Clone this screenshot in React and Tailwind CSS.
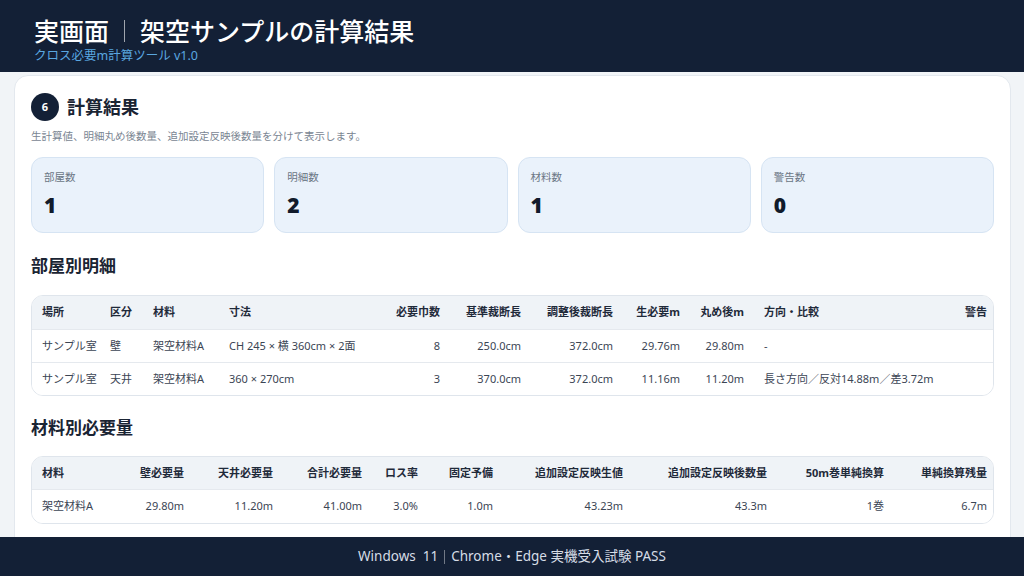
import React from 'react';

const font = { fontFamily: '"Noto Sans", "Noto Sans CJK JP", sans-serif' };

const stats = [
    { label: '部屋数', value: '1' },
    { label: '明細数', value: '2' },
    { label: '材料数', value: '1' },
    { label: '警告数', value: '0' },
];

const roomCols = [
    { name: '場所', w: 68 },
    { name: '区分', w: 43 },
    { name: '材料', w: 76 },
    { name: '寸法', w: 151 },
    { name: '必要巾数', w: 80, right: true },
    { name: '基準裁断長', w: 81, right: true },
    { name: '調整後裁断長', w: 92, right: true },
    { name: '生必要m', w: 67, right: true },
    { name: '丸め後m', w: 64, right: true },
    { name: '方向・比較', w: 178 },
    { name: '警告', w: 65, right: true },
];

const roomRows = [
    ['サンプル室', '壁', '架空材料A', 'CH 245 × 横 360cm × 2面', '8', '250.0cm', '372.0cm', '29.76m', '29.80m', '-', ''],
    ['サンプル室', '天井', '架空材料A', '360 × 270cm', '3', '370.0cm', '372.0cm', '11.16m', '11.20m', '長さ方向／反対14.88m／差3.72m', ''],
];

const matCols = [
    { name: '材料', w: 80 },
    { name: '壁必要量', w: 82, right: true },
    { name: '天井必要量', w: 89, right: true },
    { name: '合計必要量', w: 89, right: true },
    { name: 'ロス率', w: 56, right: true },
    { name: '固定予備', w: 75, right: true },
    { name: '追加設定反映生値', w: 130, right: true },
    { name: '追加設定反映後数量', w: 144, right: true },
    { name: '50m巻単純換算', w: 117, right: true },
    { name: '単純換算残量', w: 103, right: true },
];

const matRows = [
    ['架空材料A', '29.80m', '11.20m', '41.00m', '3.0%', '1.0m', '43.23m', '43.3m', '1巻', '6.7m'],
];

const DataTable = ({ cols, rows }) => (
    <div className="rounded-xl border border-[#dfe5ec] overflow-hidden">
        <table className="w-full table-fixed border-collapse text-[11px]">
            <colgroup>
                {cols.map((c) => (
                    <col key={c.name} style={{ width: c.w }} />
                ))}
            </colgroup>
            <thead>
                <tr className="bg-[#eff3f7] h-[33px]">
                    {cols.map((c) => (
                        <th
                            key={c.name}
                            className={`px-2.5 font-bold text-[#1f2a3a] whitespace-nowrap ${c.right ? 'text-right' : 'text-left'}`}
                        >
                            {c.name}
                        </th>
                    ))}
                </tr>
            </thead>
            <tbody>
                {rows.map((r, i) => (
                    <tr key={i} className="h-[33px] border-t border-[#e5e9ee] bg-white">
                        {r.map((v, j) => (
                            <td
                                key={j}
                                className={`px-2.5 text-[#3b4554] whitespace-nowrap ${cols[j].right ? 'text-right' : 'text-left'}`}
                            >
                                {v}
                            </td>
                        ))}
                    </tr>
                ))}
            </tbody>
        </table>
    </div>
);

export default function App() {
    return (
        <div className="w-[1024px] h-[576px] flex flex-col bg-[#f1f4f7] overflow-hidden" style={font}>
            <header className="h-[72px] shrink-0 bg-[#132036] px-[34px] pt-[14px]">
                <h1 className="text-[25px] leading-[34px] font-medium text-white flex items-center">
                    <span>実画面</span>
                    <span className="mx-[15px] w-px h-[22px] bg-white/60"></span>
                    <span>架空サンプルの計算結果</span>
                </h1>
                <p className="text-[12.5px] leading-[16px] text-[#5aa7e0]">クロス必要m計算ツール v1.0</p>
            </header>

            <main className="flex-1 overflow-hidden pl-[14px] pr-[13px] pt-[3px]">
                <div className="bg-white rounded-t-[14px] border border-[#e3e8ee] px-4 pt-[17px]">
                    <div className="flex items-center gap-2">
                        <span className="w-7 h-7 rounded-full bg-[#132036] text-white text-[11px] font-bold flex items-center justify-center">6</span>
                        <h2 className="text-[18px] font-bold text-[#1a2433]">計算結果</h2>
                    </div>
                    <p className="mt-[8px] text-[10.5px] text-[#7a8592]">生計算値、明細丸め後数量、追加設定反映後数量を分けて表示します。</p>

                    <div className="mt-[12px] grid grid-cols-4 gap-[10px]">
                        {stats.map((s) => (
                            <div key={s.label} className="h-[76px] rounded-xl bg-[#eaf2fb] border border-[#d6e4f3] px-3 pt-[12px]">
                                <div className="text-[10.5px] text-[#6b7684]">{s.label}</div>
                                <div className="mt-[6px] text-[21px] leading-[26px] font-black text-[#111b2b]">{s.value}</div>
                            </div>
                        ))}
                    </div>

                    <h3 className="mt-[20px] text-[17px] font-bold text-[#1a2433]">部屋別明細</h3>
                    <div className="mt-[17px]">
                        <DataTable cols={roomCols} rows={roomRows} />
                    </div>

                    <h3 className="mt-[19px] text-[17px] font-bold text-[#1a2433]">材料別必要量</h3>
                    <div className="mt-[15px] pb-6">
                        <DataTable cols={matCols} rows={matRows} />
                    </div>
                </div>
            </main>

            <footer className="h-[39px] shrink-0 bg-[#132036] flex items-center justify-center text-[13.5px] text-[#d6dde6]">
                <span>Windows&nbsp;&nbsp;11</span>
                <span className="mx-[6px] w-px h-[14px] bg-white/40"></span>
                <span>Chrome・Edge 実機受入試験 PASS</span>
            </footer>
        </div>
    );
}
